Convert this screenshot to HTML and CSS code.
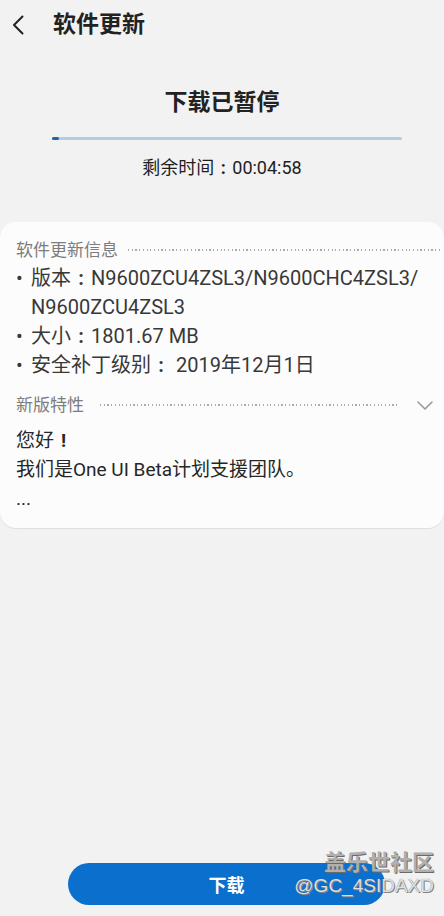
FILE: index.html
```html
<!DOCTYPE html>
<html lang="zh-CN">
<head>
<meta charset="utf-8">
<title>软件更新</title>
<link rel="stylesheet" href="styles.css">
</head>
<body>
<div class="screen">
  <header class="topbar">
    <svg class="back" width="14" height="22" viewBox="0 0 14 22"><path d="M11.5 2.5 L3 11 L11.5 19.5" fill="none" stroke="#222" stroke-width="2" stroke-linecap="round" stroke-linejoin="round"/></svg>
    <h1 class="title">软件更新</h1>
  </header>

  <section class="status">
    <div class="status-title">下载已暂停</div>
    <div class="progress"><div class="progress-fill" style="width:7px"></div></div>
    <div class="status-time">剩余时间<span class="wide">:</span>00:04:58</div>
  </section>

  <section class="card">
    <div class="sec-head">
      <span class="sec-label">软件更新信息</span>
      <span class="dots dots-first"></span>
    </div>
    <ul class="info">
      <li><span class="bullet">•</span><span>版本<span class="wide">:</span>N9600ZCU4ZSL3/N9600CHC4ZSL3/<br>N9600ZCU4ZSL3</span></li>
      <li><span class="bullet">•</span><span>大小<span class="wide">:</span>1801.67 MB</span></li>
      <li><span class="bullet">•</span><span>安全补丁级别<span class="wide">:</span> 2019年12月1日</span></li>
    </ul>
    <div class="sec-head sec-head-2">
      <span class="sec-label">新版特性</span>
      <span class="dots dots-second"></span>
      <svg class="chev" width="16" height="9" viewBox="0 0 16 9"><path d="M1 1 L8 8 L15 1" fill="none" stroke="#9a9a9a" stroke-width="1.6" stroke-linecap="round" stroke-linejoin="round"/></svg>
    </div>
    <div class="desc">
      <p>您好<span class="wide">!</span></p>
      <p>我们是One UI Beta计划支援团队。</p>
      <p>...</p>
    </div>
  </section>

  <div class="spacer"></div>

  <button class="download">下载</button>

  <div class="watermark">
    <div class="wm-cn">盖乐世社区</div>
    <div class="wm-id">@GC_4SIDAXD</div>
  </div>
</div>
</body>
</html>
```

FILE: styles.css
```css
* { box-sizing: border-box; }
html, body { margin: 0; padding: 0; }
body {
  background: #f2f2f2;
  font-family: Roboto, "Noto Sans CJK SC", sans-serif;
  color: #333;
}
.wide {
  display: inline-block;
  width: 1em;
  text-align: center;
  font-weight: 700;
}
.screen {
  position: relative;
  width: 444px;
  height: 916px;
  display: flex;
  flex-direction: column;
  overflow: hidden;
}
.topbar {
  height: 50px;
  display: flex;
  align-items: center;
  padding-left: 11px;
}
.back { display: block; }
.title {
  margin: 0 0 0 28px;
  font-size: 23px;
  font-weight: 700;
  color: #222;
  line-height: 30px;
}
.status {
  display: flex;
  flex-direction: column;
  align-items: center;
}
.status-title {
  margin-top: 38px;
  font-size: 23px;
  line-height: 30px;
  font-weight: 700;
  color: #222;
}
.progress {
  align-self: flex-start;
  margin: 19px 0 0 52px;
  width: 350px;
  height: 3px;
  border-radius: 2px;
  background: #b2cde4;
}
.progress-fill {
  height: 3px;
  border-radius: 2px;
  background: #1f66a6;
}
.status-time {
  margin-top: 16px;
  font-size: 18px;
  line-height: 24px;
  font-weight: 400;
  color: #1e1e1e;
}
.card {
  margin-top: 42px;
  background: #fcfcfc;
  border-radius: 16px;
  padding: 16px 4px 15px 16px;
  box-shadow: 0 1px 1px rgba(0,0,0,0.08);
}
.sec-head {
  display: flex;
  align-items: center;
  height: 24px;
}
.sec-label {
  font-size: 17px;
  line-height: 24px;
  color: #7d7d7d;
}
.dots {
  flex: 1;
  height: 2px;
  background-image: repeating-linear-gradient(to right, #ababab 0 1.2px, transparent 1.2px 3.7px);
}
.dots-first { margin-left: 10px; }
.dots-second { margin-left: 16px; }
.chev { margin: 0 7px 0 18px; display: block; }
.info {
  list-style: none;
  margin: 2px 0 0 0;
  padding: 0;
}
.info li {
  display: flex;
  font-size: 20px;
  line-height: 29px;
  color: #383838;
}
.bullet {
  width: 15px;
  flex: none;
}
.sec-head-2 { margin-top: 13px; }
.desc {
  margin-top: 9px;
  font-size: 19px;
  line-height: 29px;
  color: #262626;
  font-weight: 400;
}
.desc p { margin: 0; }
.spacer { flex: 1; }
.download {
  margin: 0 0 11px 68px;
  width: 317px;
  height: 42px;
  border: none;
  border-radius: 21px;
  background: #0a6fcd;
  color: #fff;
  font-family: "Noto Sans CJK SC", sans-serif;
  font-size: 18px;
  font-weight: 700;
  padding: 0;
}
.watermark {
  position: absolute;
  right: 10px;
  bottom: 18px;
  text-align: right;
  pointer-events: none;
}
.wm-cn {
  font-family: "Noto Sans CJK SC", sans-serif;
  font-size: 22px;
  line-height: 28px;
  font-weight: 700;
  color: #b0b0b0;
  text-shadow: 1px 1px 0 #6a6a6a;
}
.wm-id {
  font-family: "Liberation Sans", sans-serif;
  font-size: 19px;
  line-height: 24px;
  color: rgba(245,245,245,0.85);
  text-shadow: 0 0 1px #666, 1px 1px 0 #888;
}
```
